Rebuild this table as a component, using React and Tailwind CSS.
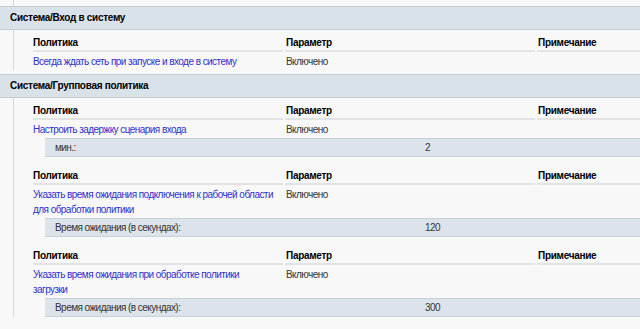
import React from "react"

const sections = [
  {
    title: "Система/Вход в систему",
    items: [
      { policy: ["Всегда ждать сеть при запуске и входе в систему"], value: "Включено" },
    ],
  },
  {
    title: "Система/Групповая политика",
    items: [
      { policy: ["Настроить задержку сценария входа"], value: "Включено", sub: { label: "мин.:", value: "2" } },
      {
        policy: ["Указать время ожидания подключения к рабочей области", "для обработки политики"],
        value: "Включено",
        sub: { label: "Время ожидания (в секундах):", value: "120" },
      },
      {
        policy: ["Указать время ожидания при обработке политики", "загрузки"],
        value: "Включено",
        sub: { label: "Время ожидания (в секундах):", value: "300" },
      },
    ],
  },
]

function PolicyBlock({ item }) {
  return (
    <div className={item.sub ? "mb-3" : "mb-[4px]"}>
      <div className="grid grid-cols-[250px_250px_1fr] gap-x-[2px] font-bold text-black tracking-[-0.3px]">
        <div className="h-[16px] leading-[14px] border-b-2 border-[#e3e3e3]">Политика</div>
        <div className="h-[16px] leading-[14px] border-b-2 border-[#e3e3e3] pl-[1px]">Параметр</div>
        <div className="h-[16px] leading-[14px] border-b-2 border-[#e3e3e3] pl-[1px]">Примечание</div>
      </div>
      <div className="grid grid-cols-[250px_250px_1fr] gap-x-[2px] pt-[2px] pb-[1px] leading-[15px]">
        <div className="text-[#2f2fd0]">
          {item.policy.map((l) => (
            <div key={l} className="whitespace-nowrap">{l}</div>
          ))}
        </div>
        <div className="text-[#333] pl-[1px]">{item.value}</div>
        <div></div>
      </div>
      {item.sub && (
        <div className="ml-[12px] h-[19px] flex items-center bg-[#dce3ea] border-y border-[#c8d0d8] text-[#333]">
          <div className="w-[380px] pl-[10px]">{item.sub.label}</div>
          <div>{item.sub.value}</div>
        </div>
      )}
    </div>
  )
}

export default function App() {
  return (
    <div className="w-[640px] h-[329px] overflow-hidden bg-[#f8f8f8] text-[10px] tracking-[-0.55px] font-['Liberation_Sans',sans-serif]">
      <div className="ml-[13px] h-[6px] border-l border-[#d6d6d6]"></div>
      {sections.map((s) => (
        <div key={s.title}>
          <div className="h-[24px] pl-[10px] pt-[4px] bg-[#dae2e9] border-y border-[#c5ccd3] font-bold text-black leading-[14px] tracking-[-0.3px]">
            {s.title}
          </div>
          <div className="ml-[13px] border-l border-[#d6d6d6] pl-[19px] pt-[6px]">
            {s.items.map((it, i) => (
              <PolicyBlock key={i} item={it} />
            ))}
          </div>
        </div>
      ))}
    </div>
  )
}
